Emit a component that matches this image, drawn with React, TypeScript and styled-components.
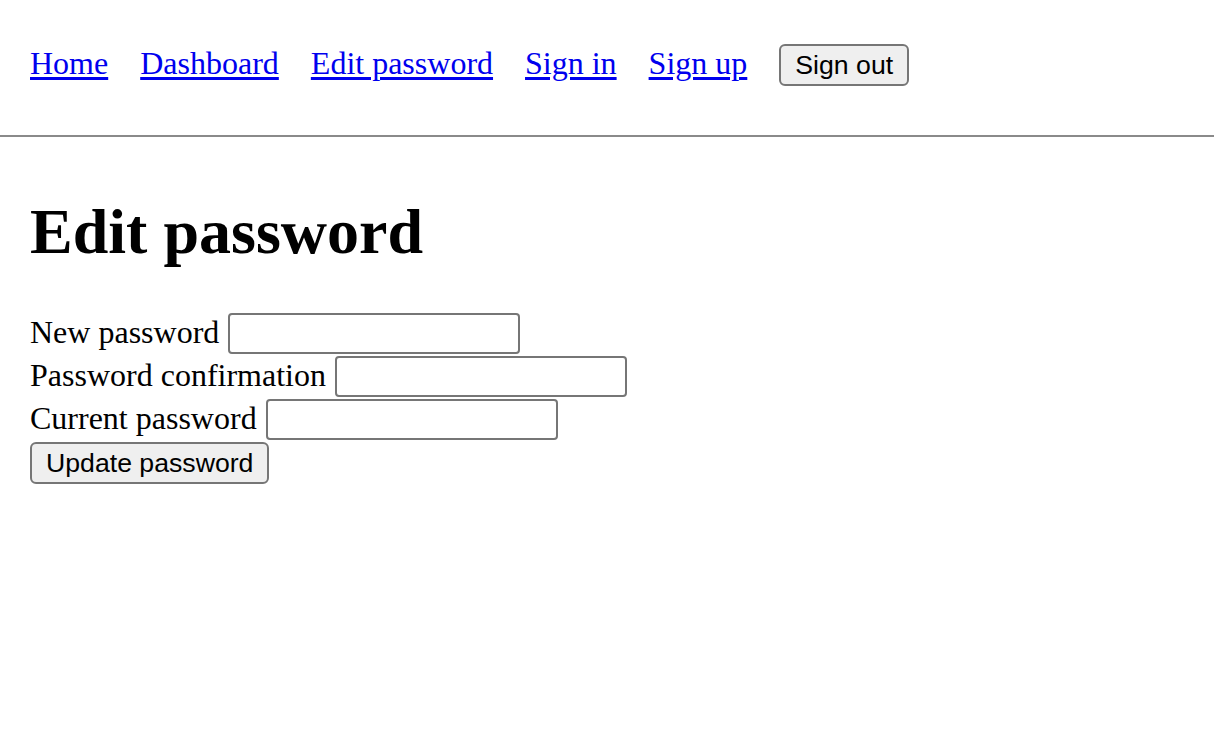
import React from 'react'
import styled, { createGlobalStyle } from 'styled-components'

const GlobalStyle = createGlobalStyle`
    body {
        margin: 0;
        background: #fff;
        color: #000;
        font-family: "Liberation Serif", "Times New Roman", serif;
        font-size: 32px;
    }
`

const App = () => {
    return (
        <>
            <GlobalStyle />
            <NavBar>
                <NavLink href="#">Home</NavLink>
                <NavLink href="#">Dashboard</NavLink>
                <NavLink href="#">Edit password</NavLink>
                <NavLink href="#">Sign in</NavLink>
                <NavLink href="#">Sign up</NavLink>
                <Button type="button">Sign out</Button>
            </NavBar>
            <Main>
                <Title>Edit password</Title>
                <Form onSubmit={(e) => e.preventDefault()}>
                    <Row>
                        <Label htmlFor="password">New password</Label>
                        <Input id="password" type="password" />
                    </Row>
                    <Row>
                        <Label htmlFor="password_confirmation">Password confirmation</Label>
                        <Input id="password_confirmation" type="password" />
                    </Row>
                    <Row>
                        <Label htmlFor="current_password">Current password</Label>
                        <Input id="current_password" type="password" />
                    </Row>
                    <Row>
                        <Button type="submit">Update password</Button>
                    </Row>
                </Form>
            </Main>
        </>
    )
}

export default App

const NavBar = styled.nav`
    box-sizing: border-box;
    height: 137px;
    padding: 44px 30px 0;
    border-bottom: 2px solid #8a8a8a;

    display: flex;
    align-items: baseline;
    gap: 32px;
`

const NavLink = styled.a`
    color: #0000ee;
    text-decoration: underline;
    text-underline-offset: 3px;
    font-size: 32px;
`

const Button = styled.button`
    box-sizing: border-box;
    height: 42px;
    padding: 0 14px;
    border: 2px solid #767676;
    border-radius: 6px;
    background: #efefef;
    color: #000;
    font-family: "Liberation Sans", Arial, sans-serif;
    font-size: 26.67px;
    line-height: 38px;
`

const Main = styled.main`
    padding: 0 30px;
`

const Title = styled.h1`
    margin: 58px 0 0;
    font-size: 64px;
    font-weight: bold;
    line-height: 74px;
    height: 117px;
`

const Form = styled.form`
    display: flex;
    flex-direction: column;
`

const Row = styled.div`
    height: 43px;
    display: flex;
    align-items: center;
    gap: 9px;
`

const Label = styled.label`
    line-height: 40px;
    padding-bottom: 4px;
`

const Input = styled.input`
    box-sizing: border-box;
    width: 292px;
    height: 41px;
    border: 2px solid #767676;
    border-radius: 4px;
    background: #fff;
    font-size: 26px;
    padding: 0 4px;
`
